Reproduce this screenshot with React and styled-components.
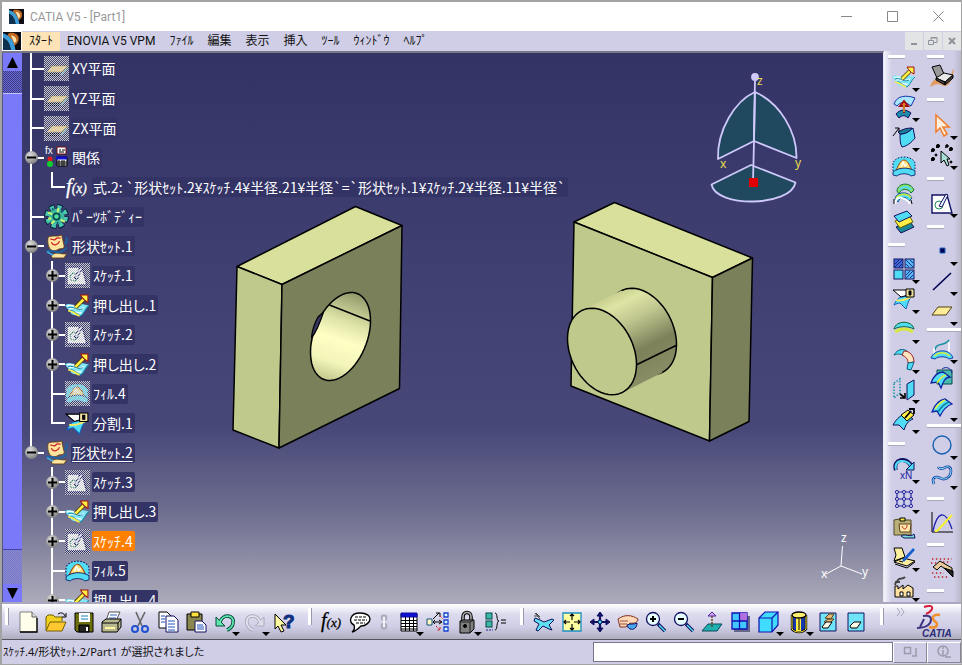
import React from 'react';
import styled, { createGlobalStyle, css } from 'styled-components';

const uiFont = 'Roboto, "Noto Sans CJK JP", sans-serif';
const cadFont = '"Noto Sans CJK JP", sans-serif';

const Global = createGlobalStyle`
  * { box-sizing: border-box; }
  body { margin: 0; background: #cfcee6; font-family: ${uiFont}; font-size: 12px; color: #111; }
  button { font: inherit; color: inherit; border: 0; background: none; padding: 0; margin: 0; }
  svg { display: block; }
`;

const Window = styled.div`
  display: flex;
  flex-direction: column;
  height: 100vh;
  border: 2px solid #a3a3a3;
  border-right-width: 1px;
  border-bottom-width: 1px;
  background: #cfcee6;
  overflow: hidden;
`;

/* ---------- title and menu ---------- */
const TitleBar = styled.header`
  display: flex;
  align-items: center;
  flex: none;
  height: 29px;
  padding-left: 7px;
  background: #fff;
`;
const Title = styled.h1`
  flex: 1;
  margin: 0 0 0 6px;
  font-size: 12px;
  line-height: 16px;
  font-weight: 400;
  color: #999;
`;
const CaptionButton = styled.button`
  display: grid;
  place-items: center;
  width: 46px;
  height: 29px;
  color: #888;
`;
const MenuBar = styled.nav`
  display: flex;
  align-items: center;
  flex: none;
  height: 20px;
  background: #cfcee6;
`;
const MenuIcon = styled.span`
  display: grid;
  place-items: center;
  width: 20px;
  height: 20px;
  background: #fff;
`;
const MenuItem = styled.button`
  height: 19px;
  padding: 0 7px;
  line-height: 19px;
  white-space: nowrap;
  background: ${(p) => (p.$active ? '#fde3b6' : 'none')};
`;
const Spacer = styled.div`
  flex: 1;
`;
const ChildButton = styled.button`
  display: grid;
  place-items: center;
  width: 18px;
  height: 18px;
  margin-left: 1px;
  background: #e3e4e6;
  color: #8d939b;
`;

/* ---------- middle area ---------- */
const Main = styled.main`
  display: grid;
  grid-template-columns: minmax(0, 1fr) 39px 38px;
  flex: 1;
  min-height: 0;
`;
const Viewport = styled.section`
  display: flex;
  position: relative;
  min-height: 0;
  overflow: hidden;
  border-top: 2px solid #77778a;
  border-right: 1px solid #e8e8f4;
  background: linear-gradient(#333366 0%, #3e3e70 35%, #474778 68%, #6f6f90 84%, #abaaba 100%);
`;
const ScrollBar = styled.div`
  display: flex;
  flex-direction: column;
  flex: none;
  position: relative;
  width: 20px;
  border-left: 1px solid #555580;
`;
const ScrollButton = styled.button`
  display: grid;
  place-items: center;
  flex: none;
  height: 18px;
  background: #7979fa;
`;
const ScrollTrack = styled.div`
  flex: none;
  height: ${(p) => p.$size}px;
  background: ${(p) =>
    p.$light
      ? 'repeating-conic-gradient(#7373d4 0 25%, #8f8fc4 0 50%) 0 0 / 2px 2px'
      : 'repeating-conic-gradient(#6464d8 0 25%, #40407e 0 50%) 0 0 / 2px 2px'};
`;
const ScrollThumb = styled.div`
  flex: 1;
  background: #7979fa;
  border-top: 1px solid #c5c5f5;
  border-bottom: 1px solid #4444a0;
`;
const SceneSvg = styled.svg`
  position: absolute;
  inset: 0;
  width: 100%;
  height: 100%;
`;

/* ---------- specification tree ---------- */
const Tree = styled.ul`
  position: relative;
  margin: 0;
  padding: 0 0 0 1px;
  list-style: none;
  font-family: ${cadFont};
  font-size: 14px;
  color: #fff;
`;
const TreeRow = styled.li`
  display: flex;
  align-items: center;
  height: 30px;
  &:nth-child(even) { height: 29px; }
  &:first-child { height: 31px; }
`;
const white = 'linear-gradient(#fff, #fff) no-repeat';
const vertical = {
  full: `${white} 7px 0 / 2px 100%`,
  top: `${white} 7px 0 / 2px 50%`,
};
const Rail = styled.span`
  display: flex;
  align-items: center;
  flex: none;
  align-self: stretch;
  width: 21px;
  padding-left: 2px;
  background: ${(p) =>
    [p.$v && vertical[p.$v], p.$h && `${white} 7px 50% / 14px 2px`].filter(Boolean).join(', ') || 'none'};
`;
const Knob = styled.button`
  display: grid;
  place-items: center;
  width: 13px;
  height: 13px;
  border-radius: 50%;
  background: radial-gradient(circle at 40% 30%, #ddd, #999 55%, #666);
`;
const TreeIcon = styled.span`
  flex: none;
  width: 25px;
  margin-right: 2px;
`;
const Label = styled.button`
  && {
    height: 20px;
    padding: 0 2px 0 1px;
    line-height: 19px;
    text-align: left;
    white-space: nowrap;
    border-radius: 2px;
    font-feature-settings: 'palt';
    background: ${(p) => (p.$selected ? '#ff8000' : '#333366')};
    ${(p) => p.$current && css`text-decoration: underline; text-underline-offset: 3px;`}
  }
`;

/* ---------- tool bars ---------- */
const SideBar = styled.div`
  display: flex;
  flex-direction: column;
  align-items: center;
  min-height: 0;
  overflow: hidden;
  background: ${(p) =>
    p.$last
      ? 'linear-gradient(90deg, #cfcee6 80%, #b9b8cc)'
      : 'linear-gradient(90deg, #f4f4fc, #cfcee6 20%)'};
`;
const SideGrip = styled.div`
  display: flex;
  align-items: center;
  align-self: stretch;
  flex: none;
  height: ${(p) => (p.$kind === 'first' ? 11 : p.$kind === 'wide' ? 8 : p.$kind === 'tall' ? 20 : 18)}px;
  padding-left: ${(p) => (p.$kind === 'wide' ? 4 : 4)}px;
  &::after {
    content: '';
    width: ${(p) => (p.$kind === 'wide' ? 34 : 17)}px;
    height: 3px;
    background: #fff;
    border-bottom: 1px solid #aaaabc;
  }
`;
const ToolButton = styled.button`
  display: grid;
  place-items: center;
  position: relative;
  flex: none;
  ${(p) =>
    p.$side
      ? css`width: 36px; height: ${p.$menu ? 30 : 28}px;`
      : css`height: 34px; width: ${p.$small ? 20 : p.$menu ? 30 : 28}px;`}
  ${(p) =>
    p.$menu &&
    css`
      &::after {
        content: '';
        position: absolute;
        right: ${p.$side ? 2 : 0}px;
        bottom: ${p.$side ? 0 : 3}px;
        border: 4px solid transparent;
        border-top-color: #000;
        border-bottom: 0;
      }
    `}
`;
const BottomBar = styled.div`
  display: flex;
  align-items: center;
  flex: none;
  height: 38px;
  border-top: 2px solid #a9a6c0;
  border-bottom: 1px solid #555562;
  background: linear-gradient(#fff 0%, #dcdbee 30%, #cfcee6 65%, #aeaec0 100%);
`;
const BarGrip = styled.div`
  flex: none;
  align-self: flex-start;
  width: ${(p) => (p.$first ? 12 : 20)}px;
  height: 20px;
  &::after {
    content: '';
    display: block;
    width: 3px;
    height: 17px;
    margin: 4px 0 0 ${(p) => (p.$first ? 3 : 10)}px;
    background: #fff;
    border-right: 1px solid #9a9aac;
  }
`;
const More = styled.span`
  align-self: flex-start;
  width: 18px;
  padding-top: 4px;
  color: #a3a2b6;
`;
const Logo = styled.svg`
  flex: none;
  width: 44px;
  height: 34px;
  margin-right: 3px;
`;
const StatusBar = styled.footer`
  display: flex;
  align-items: center;
  flex: none;
  height: 24px;
  padding-left: 1px;
`;
const StatusText = styled.span`
  flex: 1;
  font-family: "Noto Sans", "Noto Sans CJK JP", sans-serif;
  font-size: 11px;
  line-height: 20px;
  white-space: nowrap;
  font-feature-settings: 'palt';
`;
const CommandInput = styled.input`
  flex: 0 1 300px;
  height: 20px;
  padding: 0 4px;
  border: 1px solid #77778a;
  border-radius: 0;
  background: #fff;
  font: inherit;
`;
const StatusButton = styled.button`
  && {
    display: grid;
    place-items: center;
    width: 34px;
    height: 21px;
    border: 1px solid;
    border-color: #fff #85859a #85859a #fff;
  }
`;

/* ---------- icons ---------- */
const N = '#101060';
const C = '#4fdcf4';
const Y = '#ffee44';
const Icon = ({ children, size = 24 }) => (
  <svg width={size} height={size} viewBox="0 0 24 24" fill="none" stroke="#000" strokeWidth="1" aria-hidden="true">
    {children}
  </svg>
);

const extrude = (
  <>
    <path d="M0 12C5 8 8 14 14 10l9 2c-4 3-4 7-8 10C10 21 6 22 5 18z" fill="#7fe6f6" stroke="none" />
    <path d="M2 12.500c5-2 7 2 12-1M4 15c5-2 8 3 14-1M6 18c4-1 6 2 10 1" stroke="#fff" strokeWidth="1.200" />
    <path d="M5 17c4-1 6 4 10 5 4-3 4-7 8-10M3 14c6-2 8 4 14 1" stroke="#1888a8" />
    <path d="M3 17c5 0 7 4 11 5" stroke={Y} strokeWidth="1.600" />
    <path d="M10 14l8-8" stroke="#403000" strokeWidth="4" />
    <path d="M10 14l8-8" stroke={Y} strokeWidth="2.600" />
    <path d="M15 2h7v7l-2.500-1.500-3-3z" fill={Y} stroke="#a01010" />
  </>
);
const fill = (
  <>
    <path d="M1 19V9C4 1 20 1 23 9v12l-4 1c-4-3-10-3-14 0l-4-1z" fill={C} stroke="none" />
    <path d="M1 17V9C4 1 20 1 23 9v8" stroke={N} strokeDasharray="1.500 1.500" />
    <path d="M4 16C6 13 8 6 12 6s6 7 8 10c-5-2-11-2-16 0z" fill="#ffdf70" stroke="#9a4010" />
    <path d="M9 13l2-5 2 4 2-2" stroke="#fff" strokeWidth="1.500" />
    <path d="M1 18v3l4 1c3-3 11-3 14 0l4-1v-4C17 13 7 13 1 18z" fill={C} stroke={N} strokeWidth=".8" />
  </>
);
const split = (
  <>
    <path d="M2 18c2-5 5-8 8-8l12-3c-5 4-6 9-8 15l-6-6c-2 0-4 1-6 2z" fill={C} stroke="#1060c0" />
    <path d="M4 13c5 2 10-1 15-3" stroke="#ffe860" strokeWidth="1.800" />
    <path d="M1 3h15v5l-7 2z" fill="#fff" />
    <path d="M14 2h8v8h-8z" fill="#f0e0a0" />
    <path d="M17 4h2v4h-2z" fill="#000" />
  </>
);
const sheets = (
  <>
    <path d="M4 3c3-2 9 0 13-2l2 9c1 2 0 4-2 4-4 0-5 3-9 2-4-2-5-8-4-13z" fill="#ffe4a0" stroke="#604010" strokeWidth=".8" />
    <path d="M6 5c2-1 3 2 5 0s3-1 5-1M7 8c2 4 6 3 8-1" stroke="#d02020" strokeWidth="1.200" />
    <path d="M7 21c4-5 9-1 15-2l-3 4H8z" fill="#ffe4a0" stroke="#604010" strokeWidth=".8" />
    <path d="M2 16c3 1 6-1 9 1s7 0 11-4M21 3c2 3 1 5-1 7" stroke="#1868a8" strokeWidth="1.500" />
    <path d="M3 17c2 1 3 3 6 3" stroke="#40b0e0" strokeWidth="1.500" />
  </>
);
const gear = (
  <>
    <circle cx="12" cy="12" r="9" stroke="#062038" strokeWidth="6" strokeDasharray="5.070 2" />
    <circle cx="12" cy="12" r="9" stroke="#4cc8b0" strokeWidth="4" strokeDasharray="4 3.070" strokeDashoffset="-.5" />
    <circle cx="12" cy="12" r="7.500" fill="#3fb8a0" stroke="none" />
    <circle cx="12" cy="12" r="3" fill="#50e0a0" stroke="#064850" strokeWidth="1.600" />
    <path d="M4 8l4 2M16 15l4 2M7 19l3-3M14 4l-1 4M7 14H4" stroke="#c8f870" strokeWidth="2" />
    <path d="M16 8l3-2M9 6l-1-2M13 17v3" stroke="#0c5878" strokeWidth="1.500" />
  </>
);
const sketch = (
  <>
    <path d="M2 4h15l5 18H2z" fill="#fff" stroke={N} strokeWidth="1.400" />
    <circle cx="9" cy="14" r="4" stroke="#209060" />
    <path d="M9 15l7-12 2 1-6 12z" fill="#e8f4ff" stroke={N} />
  </>
);
const plane = (
  <>
    <path d="M8 10h16l-6 6H3z" fill="#ffd880" stroke="#806820" strokeWidth=".6" />
    <path d="M2 18.500h14" stroke="#000820" strokeWidth="3" strokeDasharray="1 1" />
    <path d="M17 19l6-7" stroke="#60b8c0" strokeWidth="1.500" />
  </>
);
const curveSurf = (
  <>
    <path d="M2 16C6 9 10 5 15 4l7 6c-6 1-9 5-12 12z" fill={C} stroke={N} />
    <path d="M6 19c4-7 7-10 12-12" stroke="#1a70c8" strokeWidth="2" />
  </>
);
const hidden = (shape) => (
  <svg width="25" height="25" viewBox="0 0 25 25" fill="none" aria-hidden="true">
    <rect width="25" height="25" fill="#45456e" />
    {shape}
    <rect width="25" height="25" fill="url(#veil)" shapeRendering="crispEdges" />
  </svg>
);
const fx = (color) => (
  <text x="1" y="17" fontFamily="Liberation Serif, serif" fontStyle="italic" fontSize="20" fill={color} stroke={color} strokeWidth="0.300">
    f<tspan fontSize="13" dx="0">(x)</tspan>
  </text>
);

const icons = {
  extrude, fill, split, gear, sketch, curveSurf,
  revolve: (<>
    <path d="M2 9C5 0 15 0 23 3l-4 8C13 6 8 7 5 11z" fill="#a8e8ff" stroke="#1830a8" />
    <path d="M4 19c4-5 10-5 15-1l-3 5c-3-3-6-3-9 0z" fill="#1c8aa8" stroke={N} />
    <path d="M12 18V9M8 11l4-5 4 5z" fill="#f08030" stroke="#a01010" strokeWidth="2" /><path d="M12 17V9" stroke={Y} />
  </>),
  offset: (<>
    <path d="M8 9c5 0 9-2 13-6l2 10c-4 5-8 8-13 9-2-3-2-8-2-13z" fill={C} stroke={N} />
    <path d="M8 9c5 0 9-2 12-6-5 0-9 1-14 4z" fill="#1d7f96" stroke={N} />
    <path d="M1 11l6-8M3 3h4v4" />
  </>),
  sweep: (<>
    <path d="M5 9c1-9 14-9 17-1l-3 3C16 6 9 6 7 12z" fill="#8fe06a" stroke="#107040" />
    <path d="M8 8c2-4 8-4 11 0" stroke={C} strokeWidth="2" />
    <path d="M3 17c1-8 14-8 17-1l-3 3C14 14 8 14 6 20z" fill={C} stroke="#104890" />
    <path d="M4 17c2-6 12-6 15-1" stroke="#c8e840" strokeWidth="1.600" />
    <path d="M3 22c1-7 5-7 7-6s6 1 8 6" stroke="#fff" strokeWidth="2" /><path d="M2 22v-5M20 22l-1-4" />
  </>),
  blend: (<>
    <path d="M4 17l14-5 4 5-13 6z" fill="#1c8a98" stroke={N} />
    <path d="M3 11l14-6 4 7-13 6z" fill={Y} stroke="#606000" />
    <path d="M2 6l13-5 5 5L7 12z" fill={C} stroke={N} />
  </>),
  join: (<>
    <rect x="2" y="2" width="9" height="9" fill="#4068d8" stroke={N} /><rect x="13" y="2" width="9" height="9" fill="#58b8f8" stroke={N} />
    <rect x="2" y="13" width="9" height="9" fill={C} stroke={N} /><rect x="13" y="13" width="9" height="9" fill="#58b8f8" stroke={N} />
    <path d="M14 3l7 7M14 7l3 3M18 3l3 3M14 18l4-4M14 21l7-7M18 21l3-3M3 7l4-4M3 10l7-7M7 10l3-3" stroke={N} strokeWidth=".8" />
  </>),
  dome: (<>
    <path d="M2 12C4 3 20 3 22 12c-6-3-14-3-20 0z" fill={C} stroke="#106030" /><path d="M3 15c6-4 12-4 18 0" stroke="#d8e840" strokeWidth="3" />
  </>),
  fillet: (<>
    <path d="M2 8C6 1 12 2 15 4l-3 5C8 6 5 7 2 8z" fill={C} stroke="#106080" />
    <path d="M12 4c6 0 10 5 10 11l-6 1c0-4-2-6-6-8z" fill="#ffe4c0" stroke="#a02020" /><path d="M22 15l-3 8-4-1 1-6z" fill={C} stroke="#106080" />
  </>),
  translate: (<>
    <path d="M2 6l6-4v14l-6 5z" stroke="#1890a8" strokeDasharray="1.500 1.500" strokeWidth="1.500" /><path d="M15 7l7-4v15l-7 5z" fill={C} stroke={N} />
    <path d="M8 17l4 3M13 16v5H8" strokeWidth="1.600" />
  </>),
  extrapolate: (<>
    <path d="M1 18C5 11 9 8 14 7l7 5c-5 2-7 5-9 11l-5-5z" fill={C} stroke={N} />
    <path d="M9 8l7-5 6 5-7 6z" fill={Y} /><path d="M13 11l6-7M17 2h5v5" strokeWidth="1.800" />
  </>),
  repeat: (<>
    <path d="M4 13C0 2 15-1 19 9" stroke={N} strokeWidth="4" /><path d="M4 12.500C1 3 14 1 19 9" stroke={C} strokeWidth="2.200" />
    <path d="M22 5v8h-8z" fill={C} stroke={N} />
    <text x="8" y="22" fontFamily="Liberation Sans, sans-serif" fontSize="10" fill="#1818a0" stroke="none">xN</text>
  </>),
  grid: (<>
    <path d="M4 5h16M4 12h16M4 19h16M5 4v16M12 4v16M19 4v16" stroke="#2828a0" strokeWidth="1.200" />
    {[5, 12, 19].map((x) => [5, 12, 19].map((y) => <circle key={`${x}-${y}`} cx={x} cy={y} r="1.600" fill="#cfcee6" stroke="#2828a0" />))}
  </>),
  catalog: (<>
    <path d="M2 4l5-1 2 1h10v15H2z" fill="#b8b078" stroke="#504820" /><path d="M8 2h5v3H8z" fill={Y} />
    <path d="M7 8h12l-1 8H8z" fill="#ffe8a8" stroke="#604020" /><path d="M10 10c2 5 5 3 5-1" stroke="#c02020" /><path d="M9 20c4-3 9 2 13-2l1 4H12z" fill="#7ce0d8" stroke={N} />
  </>),
  deskSketch: (<>
    <path d="M2 17l9-4 12 3-8 5z" fill="#fff0a0" /><path d="M2 3h8l3 9-11 4 2-6z" fill="#fff0a0" />
    <path d="M11 16L22 4" stroke="#1860d0" strokeWidth="2.600" /><path d="M3 19l12 4 8-6M7 16l4 1" />
  </>),
  factory: (<>
    <path d="M3 11h3v3l5-4v4l5-4 5 3v9H3z" fill="#ffe0a0" /><path d="M3 10l1-3h4M5 6c3-4 5-1 8-4" stroke="#444" strokeWidth="2" /><path d="M8 17h3v4H8zM15 17h3v4h-3z" fill="#fff" />
  </>),
  chair: (
    <>
      <path d="M0 23C3 14 8 13 14 17c4 2 6-5 10-13-1 12-5 19-10 18-6-3-9-2-14 1z" fill="#e09a60" stroke="none" />
      <path d="M2 3l8-2 4 9-7 4z" fill="#999" /><path d="M6 14l8-5 9 2-8 7z" fill="#e8e8e8" /><path d="M15 18v3l8-7v-3zM6 14v2l9 5v-3z" fill="#444" />
    </>
  ),
  select: (<path d="M6 2v17l4-4 4 8 3-2-4-7h6z" fill="#fff0e0" stroke="#f08030" strokeWidth="1.600" />),
  multiSelect: (<>
    <g fill="#000"><circle cx="8" cy="3" r="1.600" /><circle cx="3" cy="7" r="1.500" /><circle cx="17" cy="3" r="1.300" /><circle cx="3" cy="16" r="1.600" /><circle cx="21" cy="6" r="1.600" /><circle cx="6" cy="12" r="1" /><circle cx="21" cy="19" r="1" /></g>
    <path d="M6 5l3-3M15 5l3-3M1 9l4-3M1 18l4-3M19 8l3-3" />
    <path d="M11 8v12l3-3 3 6 2-1-2-6h3z" fill="#a8e0d8" />
  </>),
  point: (<path d="M10 9h5v5h-5z" fill="#000050" stroke="#2060c0" />),
  line: (<path d="M3 21L21 4" stroke="#000050" strokeWidth="1.600" />),
  planeTool: (<path d="M8 8h14l-6 8H2z" fill="#ffec98" stroke="#504010" />),
  project: (<>
    <path d="M5 13C6 5 14 10 19 3" stroke="#1a90a0" strokeWidth="1.500" /><path d="M4 11v8M19 5v12" stroke="#fff" strokeWidth="1.500" />
    <path d="M1 21C4 12 20 11 23 21l-4 1c-3-3-11-3-14 0z" fill={C} stroke="#1840a8" /><path d="M4 19c5-4 11-4 16 0" stroke="#d8e840" strokeWidth="1.600" />
  </>),
  intersect: (<>
    <path d="M7 4h15v14H7z" fill="#48b8b0" stroke="#084848" /><path d="M1 17C4 9 9 6 13 6l7 5c-5 0-7 5-9 11l-3-6z" fill={C} stroke="#1020a0" strokeWidth="1.300" /><path d="M7 17c3-5 5-7 9-8" stroke="#d8e840" strokeWidth="1.800" /><path d="M12 3c4-3 9-1 10 4" stroke="#1020a0" />
  </>),
  parallel: (<>
    <path d="M2 17C5 9 9 5 15 4l7 5c-6 2-9 6-12 12l-3-5z" fill={C} stroke="#1020a0" strokeWidth="1.300" /><path d="M8 17c3-5 6-8 11-10" stroke="#1080a0" strokeWidth="1.600" /><path d="M5 14c3-5 6-7 10-9" stroke="#e8f840" strokeWidth="1.600" />
  </>),
  circle: (<circle cx="12" cy="12" r="9" stroke="#1860b0" strokeWidth="1.400" />),
  spline: (<><path d="M4 21C1 14 6 13 10 15c5 3 11-1 11-7 0-5-4-5-7-3-3 1-5 1-6-1" stroke="#1840a0" strokeWidth="2.600" /><path d="M4 21C1 14 6 13 10 15c5 3 11-1 11-7 0-5-4-5-7-3-3 1-5 1-6-1" stroke="#8ff0ff" strokeWidth="1" /></>),
  law: (<><path d="M2 2v20h21" /><path d="M3 21C7 2 15-2 22 19" stroke="#2020b0" strokeWidth="1.300" /><path d="M5 21h2L22 5" stroke="#f4f030" strokeWidth="2" /></>),
  draft: (<>
    <path d="M3 11l7-6 12 7v6L11 10l-4 4z" fill="#e8c898" /><path d="M14 12l9 3v6z" fill="#222" />
    <path d="M2 3h20M1 7h7M2 17h12M4 21h14M13 6h8" stroke="#c02020" strokeWidth="1.400" strokeDasharray="1.400 2.500" />
  </>),
  newFile: (<><path d="M4 2h12l5 5v15H4z" fill="#ffffec" stroke="#808080" /><path d="M16 2v5h5" fill="#ddd" stroke="#606060" /><path d="M21 8v14H4" strokeWidth="1.300" /></>),
  open: (<><path d="M2 20V7l2-2h5l2 2h7v4" fill="#f0d020" stroke="#706000" /><path d="M2 21l4-9h16l-4 9z" fill="#ffc830" stroke="#706000" /><path d="M14 4c3-2 6-1 7 2M22 3v4h-4" /></>),
  save: (<><path d="M3 3h18v19H5l-2-2z" fill="#6e7010" /><path d="M7 3h11v9H7z" fill="#fff" stroke="none" /><path d="M9 6h7M9 9h7" stroke="#1880c0" /><path d="M7 15h10v7H7z" fill="#222" /><path d="M14 17h2v4h-2z" fill="#fff" stroke="none" /></>),
  print: (<><path d="M9 2h11l-4 9H6z" fill="#fff" stroke="#555" /><path d="M10 5h7M9 8h7" stroke="#3060c0" /><path d="M2 12l4-3h15v8l-4 5H2z" fill="#b8b890" /><path d="M2 13h16l3-4M18 13v7" /><path d="M5 18h10" stroke="#fff8a0" strokeWidth="2" /></>),
  cut: (<><path d="M8 2l6 14M17 2L10 16" stroke="#666" strokeWidth="1.600" /><circle cx="7" cy="19" r="3" stroke="#2050d0" strokeWidth="2" /><circle cx="17" cy="19" r="3" stroke="#2050d0" strokeWidth="2" /></>),
  copy: (<><path d="M3 2h8l4 4v12H3z" fill="#fff" /><path d="M10 6h8l4 4v12H10z" fill="#fff" stroke={N} /><path d="M5 6h4M5 9h4M5 12h4M12 11h7M12 14h7M12 17h7M12 20h7" stroke="#2050c0" /></>),
  paste: (<><path d="M3 4h15v16H3z" fill="#8a8850" /><path d="M7 2h8v5H7z" fill="#ffe040" /><path d="M11 11h7l4 4v7H11z" fill="#fff" stroke={N} /><path d="M13 15h6M13 17h7M13 19h7" stroke="#2050c0" /></>),
  undo: (<><path d="M7 12C10 3 22 5 20 13c0 3-3 6-6 7" stroke="#064838" strokeWidth="3.600" /><path d="M3 7v9h9z" fill="#60e8b0" stroke="#064838" /><path d="M7 12C10 3 22 5 20 13c0 3-3 6-6 7" stroke="#60e8b0" strokeWidth="1.800" /></>),
  redo: (<><path d="M17 12C14 3 2 5 4 13c0 3 3 6 6 7" stroke="#aaa9bc" strokeWidth="3.600" /><path d="M21 7v9h-9z" fill="#dddcea" stroke="#aaa9bc" /><path d="M17 12C14 3 2 5 4 13c0 3 3 6 6 7" stroke="#e4e3f0" strokeWidth="1.800" /></>),
  help: (<><path d="M3 4v15l3-3 3 6 3-1-3-6h5z" fill="#fff8a0" /><text x="11" y="18" fontFamily="Liberation Sans, sans-serif" fontWeight="bold" fontSize="19" fill="#103080" stroke="#103080">?</text></>),
  formula: fx('#000'),
  comment: (<><path d="M12 3c7 0 10 3 10 6s-4 7-9 7c-2 2-5 5-9 6 3-2 3-4 2-7-6-3-4-12 6-12z" fill="#fff" strokeWidth="1.400" /><path d="M7 7h11M6 10h13M8 13h9" strokeDasharray="3 1" /></>),
  link: (<><circle cx="12" cy="7" r="3" stroke="#a9a8ba" strokeWidth="2" /><circle cx="12" cy="17" r="3" stroke="#a9a8ba" strokeWidth="2" /><path d="M12 7v10" stroke="#fff" strokeWidth="2" /></>),
  table: (<><path d="M4 4h16v17H4z" fill="#fff" /><path d="M4 3h16v4H4z" fill="#1010d0" stroke="#1010a0" /><path d="M4 10.500h16M4 13.500h16M4 16.500h16M4 19h16M8.500 7v14M12.500 7v14M16.500 7v14" /></>),
  graph: (<><path d="M1 9h5v6H1z" fill="#fff8c0" stroke="#105080" /><g fill="#dff" stroke="#1840d0" strokeWidth="1.300"><path d="M18 3h4v4h-4zM18 10h4v4h-4zM18 17h4v4h-4z" /></g><path d="M7 12h8M7 9l6-6M13 10l3 2-3 2M10 3h4v4M9 10l-2 2 2 2" /><path d="M14 6l3 3M10 16l4 4M14 17v3h-3" stroke="#d02020" strokeDasharray="2 1.500" /></>),
  lock: (<><path d="M8 11V7c0-6 8-6 8 0v4" strokeWidth="3.600" /><path d="M8 11V7c0-6 8-6 8 0v4" stroke="#aaa" strokeWidth="1.600" /><path d="M5 11l3-1h11v9l-4 4H5z" fill="#808080" /><path d="M15 12v11M5 12h10l4-2" stroke="#222" /><circle cx="10" cy="16" r="1.500" fill="#000" /></>),
  equiv: (<><g fill="#3cb8a8" stroke="#084848"><rect x="2" y="3" width="6" height="6" /><rect x="2" y="11" width="6" height="6" /></g><path d="M2 20h7" stroke="#2020a0" strokeDasharray="2 1" /><path d="M11 3c3 0 1 8 4 8-3 0-1 9-4 9M17 10h5M17 13h5" /></>),
  fly: (<><path d="M3 8l5 2 4 2 8-3 2 1-5 5 3 5-3-1-6-3-5 5-2-1 3-6-5-3z" fill="#60e0f0" stroke={N} /><path d="M4 3l4 4M2 6h5M8 9L3 3" stroke="#444" /></>),
  fit: (<><path d="M3 3h18v18H3z" fill="#ffffa0" stroke="#1890c0" strokeWidth="1.300" /><path d="M12 4v6M12 14v6M4 12h6M14 12h6M10 6l2-2 2 2M10 18l2 2 2-2M6 10l-2 2 2 2M18 10l2 2-2 2" strokeWidth="1.200" /></>),
  pan: (<><path d="M12 4v16M4 12h16" stroke={N} strokeWidth="2.200" /><path d="M12 2l3 4H9zM12 22l3-4H9zM2 12l4-3v6zM22 12l-4-3v6z" fill={N} stroke={N} /><circle cx="12" cy="12" r="2" fill={C} stroke={N} /></>),
  rotate: (<><path d="M2 9c7-5 14-4 20 0 0 3-4 5-8 4l-4 4H4z" fill="#ffd8b8" stroke="#803020" /><path d="M4 11h8M4 14h7" stroke="#803020" strokeWidth=".8" /><path d="M11 15c1 6 10 6 10-2-4 2-6 0-10 2z" fill="#4aa8f0" stroke={N} /></>),
  zoomIn: (<><path d="M14 14l7 7" stroke={N} strokeWidth="3.600" /><path d="M15 15l6 6" stroke={C} strokeWidth="1.500" /><circle cx="9" cy="9" r="6.500" fill="#e8ffff" stroke={N} strokeWidth="1.300" /><path d="M6 9h6M9 6v6" strokeWidth="2" /></>),
  zoomOut: (<><path d="M14 14l7 7" stroke={N} strokeWidth="3.600" /><path d="M15 15l6 6" stroke={C} strokeWidth="1.500" /><circle cx="9" cy="9" r="6.500" fill="#e8ffff" stroke={N} strokeWidth="1.300" /><path d="M6 9h6" strokeWidth="2" /></>),
  normal: (<><path d="M8 14h14l-5 7H2z" fill="#20b0b0" stroke="#084858" /><path d="M12 17V6" stroke="#604010" strokeDasharray="2 1" strokeWidth="1.400" /><path d="M12 2l4 4H8z" fill="#d0b0f0" stroke="#5020a0" /></>),
  multiView: (<><path d="M6 6h16v16H6z" fill="#666688" stroke="none" /><path d="M4 3h15v16H4z" fill="#40c8ff" stroke="#1010b0" strokeWidth="1.300" /><path d="M12 3h7v8h-7z" fill="#b070e0" stroke="none" /><path d="M11.500 3v16M4 11h15" stroke="#1010b0" strokeWidth="1.300" /></>),
  iso: (<><path d="M2 8l6-6h13v13l-6 7H2z" fill="#40dcff" stroke="#1010b0" strokeWidth="1.200" /><path d="M2 8h13v14M15 8l6-6" stroke="#1010b0" strokeWidth="1.200" /></>),
  shading: (<><path d="M5 5v14c3 4 11 4 14 0V5" fill="#1838b0" stroke="#000" strokeWidth="2.400" /><path d="M5 5v14c3 4 11 4 14 0V5" stroke={Y} strokeWidth="1" /><path d="M9 7h5v14H9z" fill={Y} stroke="none" /><ellipse cx="12" cy="5" rx="7" ry="3" fill="#fff070" strokeWidth="1.300" /><path d="M12 9v11" /></>),
  hideShow: (<><path d="M4 3h16v18H4z" fill="#70e4f8" stroke={N} /><path d="M9 8l4-4h5l-3 5zM8 12l4-3h6l-4 4z" fill="#e0b878" stroke="#604020" /><path d="M6 17l4-5h6l-4 6H7z" fill="#fffbe8" /></>),
  swap: (<><path d="M4 3h16v18H4z" fill="#70e4f8" stroke={N} /><path d="M6 16l4-4h7l-4 6H7z" fill="#fffbe8" /></>),
};

const Earth = ({ size }) => (
  <svg width={size} height={size} viewBox="0 0 16 16" aria-hidden="true">
    <rect width="16" height="16" fill="#0c0c14" />
    <path d="M5 1c5-1 9 1 9 5 0 3-2 5-4 6-1-4-3-7-6-9z" fill="#c06820" />
    <path d="M7 3c3 0 5 2 5 5l-2 2C9 7 8 5 7 3z" fill="#ffe0a8" />
    <path d="M0 1c6 2 10 6 11 15H7C6 10 4 7 0 5z" fill="#3c9cd8" />
    <path d="M0 5c4 2 6 5 7 11H0z" fill="#103050" />
  </svg>
);

/* ---------- 3D scene ---------- */
const ring = (cx, cy, [ux, uy], [vx, vy]) =>
  Array.from({ length: 60 }, (_, i) => {
    const t = (i / 60) * Math.PI * 2;
    const c = Math.cos(t);
    const s = Math.sin(t);
    return `${(cx + ux * c + vx * s).toFixed(1)},${(cy + uy * c + vy * s).toFixed(1)}`;
  }).join(' ');
const hole = ring(340.5, 336.5, [30, -14.9], [-0.8, 41.4]);
const pinFront = ring(602, 351.5, [34.5, 13.8], [-0.8, 41]);
const pinBack = ring(642, 331.5, [34.5, 13.8], [-0.8, 41]);

const Scene = () => (
  <SceneSvg viewBox="2 53 881 549" preserveAspectRatio="xMidYMid slice" role="img" aria-label="Part1">
    <defs>
      <pattern id="veil" width="2" height="2" patternUnits="userSpaceOnUse">
        <path d="M0 0h1v1H0zM1 1h1v1H1z" fill="#c6c6ce" />
      </pattern>
      <linearGradient id="bore" gradientUnits="userSpaceOnUse" x1="358" y1="293" x2="328" y2="380">
        <stop offset="0" stopColor="#8f9468" />
        <stop offset="0.250" stopColor="#c9cf96" />
        <stop offset="0.350" stopColor="#e0e4a8" />
        <stop offset="0.550" stopColor="#ffffc4" />
        <stop offset="0.800" stopColor="#f2f4b8" />
        <stop offset="1" stopColor="#c4c98f" />
      </linearGradient>
      <linearGradient id="pin" gradientUnits="userSpaceOnUse" x1="601" y1="300" x2="642" y2="382">
        <stop offset="0" stopColor="#c8cf8f" />
        <stop offset="0.130" stopColor="#dee4a4" />
        <stop offset="0.350" stopColor="#bfc58e" />
        <stop offset="0.680" stopColor="#7c815a" />
        <stop offset="1" stopColor="#888d66" />
      </linearGradient>
    </defs>
    <g stroke="#000" strokeWidth="1.500" strokeLinejoin="round">
      <path d="M237 266.500L355.500 206.500L402 225.500L282 284.500Z" fill="#d8e09c" />
      <path d="M237 266.500L282 284.500L279 448L233 430Z" fill="#bfc98c" />
      <path d="M282 284.500L402 225.500L399.500 388.500L279 448Z" fill="#7a805a" />
      <polygon points={hole} fill="url(#bore)" />
      <path d="M329.500 305L370 321" />
      <path d="M323.500 312L318 317C314 324 312 331 311.500 338C316 332 320 323 323.500 312Z" fill="#34345c" strokeWidth="1.200" />
      <path d="M574 222L614.500 202.500L752.500 258L712.500 277.500Z" fill="#d8e09c" />
      <path d="M574 222L712.500 277.500L709.500 441L571 386Z" fill="#bfc98c" />
      <path d="M712.500 277.500L752.500 258L749 421.500L709.500 441Z" fill="#7a805a" />
      <polygon points={pinBack} fill="url(#pin)" />
      <path d="M581.500 310.500L621.500 290.500L662.500 372.500L622.500 392.500Z" fill="url(#pin)" stroke="none" />
      <path d="M636 365L676 345.500" />
      <polygon points={pinFront} fill="#bfc98c" />
    </g>
    <g stroke="#cfc8fa" strokeWidth="1.800" fill="#20485f" strokeLinejoin="round">
      <path d="M755 92C735 101 717 130 718 159L754 141Z" />
      <path d="M755 92C780 103 797 132 796.500 158L754 141Z" />
      <path d="M751 165L711.500 184.500C716 208 791 207 795.500 182.500Z" />
      <path d="M755 77L754 141L753 182" fill="none" />
      <circle cx="755" cy="77" r="3" fill="#cfc8fa" />
    </g>
    <rect x="749" y="178" width="9" height="9" fill="#e00000" />
    <g fontFamily="Noto Sans, sans-serif" fontSize="12" fill="#e8dc50">
      <text x="757" y="85">z</text>
      <text x="720" y="168">x</text>
      <text x="795" y="167">y</text>
    </g>
    <path d="M842.500 546L841 566L862 574M841 566L826 574" stroke="#fff" fill="none" />
    <g fontFamily="Noto Sans, sans-serif" fontSize="12" fill="#fff">
      <text x="841" y="542">z</text>
      <text x="821" y="578">x</text>
      <text x="862" y="576">y</text>
    </g>
  </SceneSvg>
);

const relations = (
  <svg width="25" height="25" viewBox="0 0 25 25" fill="none" aria-hidden="true">
    <text x="1" y="9" fontFamily="Liberation Sans, sans-serif" fontSize="10" fill="#fff">fx</text>
    <path d="M13 2h9v7h-9z" fill="#fff" stroke="#701010" /><path d="M15 5h2M18 5h3M15 7h5" stroke="#000" />
    <circle cx="6" cy="14" r="2.500" fill="#e02020" /><circle cx="6" cy="19" r="3" fill="#10d030" />
    <path d="M13 12h10v9H13z" fill="#fff" stroke="#000" /><path d="M12 13h11" stroke="#1010d0" strokeWidth="3" /><path d="M13 17h10M13 19h10M15 15v6M18 15v6M20 15v6" stroke="#000" />
  </svg>
);

const rows = [
  { icon: hidden(plane), text: 'XY平面' },
  { icon: hidden(plane), text: 'YZ平面' },
  { icon: hidden(plane), text: 'ZX平面' },
  { icon: relations, text: '関係', knob: '-' },
  { icon: <Icon size={25}>{fx('#fff')}</Icon>, text: '式.2: `形状ｾｯﾄ.2¥ｽｹｯﾁ.4¥半径.21¥半径`=`形状ｾｯﾄ.1¥ｽｹｯﾁ.2¥半径.11¥半径`', child: true, last: true },
  { icon: <Icon size={25}>{gear}</Icon>, text: 'ﾊﾟｰﾂﾎﾞﾃﾞｨｰ' },
  { icon: <Icon size={25}>{sheets}</Icon>, text: '形状ｾｯﾄ.1', knob: '-' },
  { icon: hidden(sketch), text: 'ｽｹｯﾁ.1', child: true, knob: '+' },
  { icon: <Icon size={25}>{extrude}</Icon>, text: '押し出し.1', child: true, knob: '+' },
  { icon: hidden(sketch), text: 'ｽｹｯﾁ.2', child: true, knob: '+' },
  { icon: <Icon size={25}>{extrude}</Icon>, text: '押し出し.2', child: true, knob: '+' },
  { icon: hidden(fill), text: 'ﾌｨﾙ.4', child: true },
  { icon: <Icon size={25}>{split}</Icon>, text: '分割.1', child: true, last: true },
  { icon: <Icon size={25}>{sheets}</Icon>, text: '形状ｾｯﾄ.2', knob: '-', root: 'top', current: true },
  { icon: hidden(sketch), text: 'ｽｹｯﾁ.3', child: true, knob: '+', root: 'none' },
  { icon: <Icon size={25}>{extrude}</Icon>, text: '押し出し.3', child: true, knob: '+', root: 'none' },
  { icon: hidden(sketch), text: 'ｽｹｯﾁ.4', child: true, knob: '+', root: 'none', selected: true },
  { icon: <Icon size={25}>{fill}</Icon>, text: 'ﾌｨﾙ.5', child: true, root: 'none' },
  { icon: <Icon size={25}>{extrude}</Icon>, text: '押し出し.4', child: true, knob: '+', root: 'none' },
];

const KnobButton = ({ sign }) => (
  <Knob type="button" aria-label={sign === '+' ? '展開' : '折りたたみ'}>
    <svg width="9" height="9" viewBox="0 0 9 9" stroke="#000" strokeWidth="2">
      <path d={sign === '+' ? 'M0 4.500h9M4.500 0v9' : 'M0 4.500h9'} />
    </svg>
  </Knob>
);

const SpecTree = () => (
  <Tree>
    {rows.map((r) => (
      <TreeRow key={r.text}>
        <Rail $v={r.root || 'full'} $h={!r.child}>{r.knob && !r.child && <KnobButton sign={r.knob} />}</Rail>
        {r.child && <Rail $v={r.last ? 'top' : 'full'} $h>{r.knob && <KnobButton sign={r.knob} />}</Rail>}
        <TreeIcon>{r.icon}</TreeIcon>
        <Label type="button" $selected={r.selected} $current={r.current}>{r.text}</Label>
      </TreeRow>
    ))}
  </Tree>
);

/* A trailing "v" marks a tool that opens a sub-menu; "|" is a grip, "||" a taller one, "=" a full-width one. */
const leftTools = 'extrude v,revolve v,offset v,fill,sweep,blend,|,join v,split v,dome v,fillet v,translate v,extrapolate v,||,repeat v,grid v,catalog,deskSketch v,factory v'.split(',');
const rightTools = 'chair,||,select v,multiSelect v,|,sketch v,|,point v,line v,planeTool v,=,project v,intersect,parallel v,=,circle v,spline v,|,law,|,draft,|'.split(',');
const bottomTools = 'newFile,open,save,print,cut,copy,paste,undo v,redo v,help,|,formula,comment,link,table v,graph,lock v,equiv,|,fly,fit,pan,rotate,zoomIn,zoomOut,normal,multiView,iso v,shading v,hideShow,swap,|'.split(',');
const gripKinds = { '|': 'normal', '||': 'tall', '=': 'wide' };

const Tools = ({ items, side }) =>
  items.map((item, i) => {
    if (gripKinds[item]) {
      return side ? <SideGrip key={i} $kind={gripKinds[item]} /> : <BarGrip key={i} />;
    }
    const [name, menu] = item.split(' ');
    return (
      <ToolButton key={i} type="button" aria-label={name} $side={side} $menu={!!menu} $small={name === 'link'}>
        <Icon size={name === 'link' ? 20 : 24}>{icons[name]}</Icon>
      </ToolButton>
    );
  });

const menus = ['ENOVIA V5 VPM', 'ﾌｧｲﾙ', '編集', '表示', '挿入', 'ﾂｰﾙ', 'ｳｨﾝﾄﾞｳ', 'ﾍﾙﾌﾟ'];

export default function App() {
  return (
    <Window>
      <Global />
      <TitleBar>
        <Earth size={15} />
        <Title>CATIA V5 - [Part1]</Title>
        <CaptionButton type="button" aria-label="最小化">
          <svg width="11" height="11" stroke="currentColor"><path d="M0 5.500h11" /></svg>
        </CaptionButton>
        <CaptionButton type="button" aria-label="最大化">
          <svg width="11" height="11" stroke="currentColor" fill="none"><path d="M.5.500h10v10H.5z" /></svg>
        </CaptionButton>
        <CaptionButton type="button" aria-label="閉じる">
          <svg width="11" height="11" stroke="currentColor"><path d="M.5.500l10 10M10.500.500l-10 10" /></svg>
        </CaptionButton>
      </TitleBar>
      <MenuBar>
        <MenuIcon><Earth size={18} /></MenuIcon>
        <MenuItem type="button" $active>ｽﾀｰﾄ</MenuItem>
        {menus.map((m) => <MenuItem key={m} type="button">{m}</MenuItem>)}
        <Spacer />
        <ChildButton type="button" aria-label="最小化">
          <svg width="10" height="10" stroke="currentColor" strokeWidth="2"><path d="M2 8h6" /></svg>
        </ChildButton>
        <ChildButton type="button" aria-label="元に戻す">
          <svg width="10" height="10" stroke="currentColor" fill="none"><path d="M.5 4.500h5v4h-5zM3 4V1.500h6v5H6M3 2h6" /></svg>
        </ChildButton>
        <ChildButton type="button" aria-label="閉じる">
          <svg width="8" height="8" stroke="currentColor" strokeWidth="2"><path d="M1 1l6 6M7 1L1 7" /></svg>
        </ChildButton>
      </MenuBar>
      <Main>
        <Viewport>
          <Scene />
          <ScrollBar>
            <ScrollButton type="button" aria-label="上へ"><svg width="11" height="11"><path d="M5.500 0L11 11H0z" /></svg></ScrollButton>
            <ScrollTrack $size={22} />
            <ScrollThumb />
            <ScrollTrack $size={34} $light />
            <ScrollButton type="button" aria-label="下へ"><svg width="11" height="11"><path d="M5.500 11L0 0h11z" /></svg></ScrollButton>
          </ScrollBar>
          <SpecTree />
        </Viewport>
        <SideBar>
          <SideGrip $kind="first" />
          <Tools items={leftTools} side />
        </SideBar>
        <SideBar $last>
          <SideGrip $kind="first" />
          <Tools items={rightTools} side />
        </SideBar>
      </Main>
      <BottomBar>
        <BarGrip $first />
        <Tools items={bottomTools} />
        <Spacer />
        <More>
          <svg width="10" height="8" stroke="currentColor" fill="none"><path d="M1 0l3 4-3 4M5 0l3 4-3 4" /></svg>
        </More>
        <Logo viewBox="0 0 44 34" fill="none" aria-label="CATIA">
          <path d="M10 2c6-2 9-1 8 2-1 2-3 4-6 5" stroke="#d8203c" strokeWidth="2" />
          <path d="M9 11c9-1 9 3 7 7-2 3-7 5-13 5M10 14l-4 8" stroke="#3c3480" strokeWidth="2" />
          <path d="M26 10c-5-1-8 1-7 4 1 3 5 3 4 6-1 3-4 3-8 2" stroke="#f0902c" strokeWidth="2.400" />
          <text x="8" y="32" fontFamily="Liberation Sans, sans-serif" fontStyle="italic" fontWeight="bold" fontSize="10" fill="#2c2c78">CATIA</text>
        </Logo>
      </BottomBar>
      <StatusBar>
        <StatusText>ｽｹｯﾁ.4/形状ｾｯﾄ.2/Part1 が選択されました</StatusText>
        <CommandInput aria-label="コマンド" />
        <StatusButton type="button" aria-label="ダイアログ">
          <svg width="14" height="12" stroke="#9a9aac" fill="none"><path d="M1.500 1.500h6v6h-6zM9 10h4V2" strokeWidth="1.500" /></svg>
        </StatusButton>
        <StatusButton type="button" aria-label="情報">
          <svg width="16" height="14" stroke="#9a9aac" fill="none" strokeWidth="1.500"><circle cx="7" cy="6" r="5" /><path d="M7 5v5M7 2v2M9 12h6" /></svg>
        </StatusButton>
      </StatusBar>
    </Window>
  );
}
